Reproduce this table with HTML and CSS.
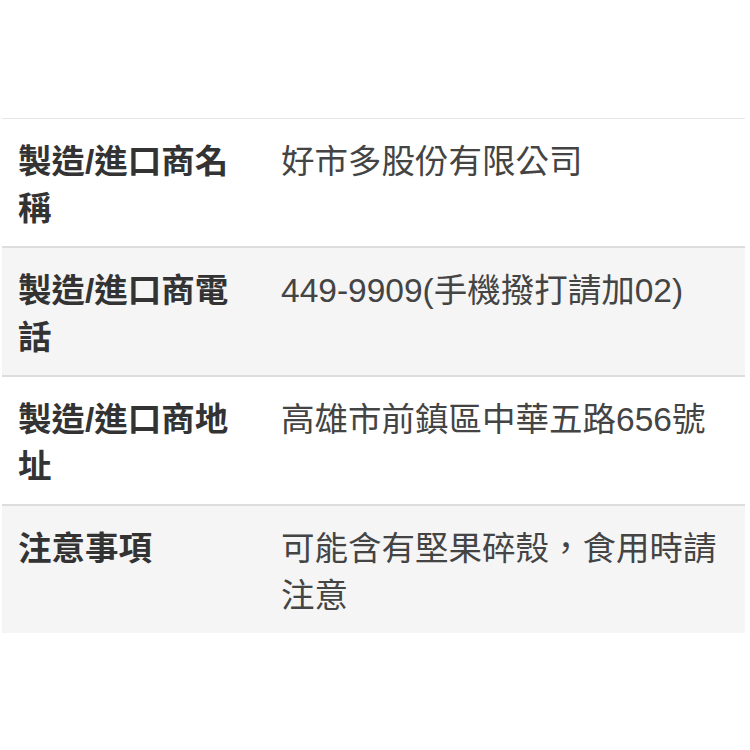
FILE: index.html
```html
<!DOCTYPE html>
<html lang="zh-Hant">
<head>
<meta charset="utf-8">
<link rel="stylesheet" href="styles.css">
</head>
<body>
<div class="spec">
  <div class="row">
    <div class="label">製造/進口商名稱</div>
    <div class="value">好市多股份有限公司</div>
  </div>
  <div class="row alt">
    <div class="label">製造/進口商電話</div>
    <div class="value">449-9909(手機撥打請加02)</div>
  </div>
  <div class="row">
    <div class="label">製造/進口商地址</div>
    <div class="value">高雄市前鎮區中華五路656號</div>
  </div>
  <div class="row alt">
    <div class="label">注意事項</div>
    <div class="value">可能含有堅果碎殼，食用時請注意</div>
  </div>
</div>
</body>
</html>
```

FILE: styles.css
```css
html, body {
  margin: 0;
  padding: 0;
  background: #ffffff;
}
body {
  font-family: "Liberation Sans", "Noto Sans CJK TC", sans-serif;
  font-size: 33.5px;
  line-height: 47px;
  color: #333333;
}
.spec {
  margin: 118px 0 0 2px;
  width: 743px;
  border-top: 1px solid #e6e6e6;
}
.row {
  display: grid;
  grid-template-columns: 263px 1fr;
  border-top: 2px solid #dddddd;
  background: #ffffff;
}
.row:first-child {
  border-top: none;
}
.row.alt {
  background: #f5f5f5;
}
.label {
  padding: 19px 16px 14px 16px;
  font-weight: bold;
  color: #333333;
}
.value {
  padding: 19px 16px 14px 16px;
  color: #444444;
}
```
